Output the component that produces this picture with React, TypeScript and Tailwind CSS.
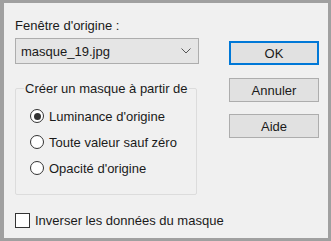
import React from "react";

const font = { fontFamily: '"Liberation Sans", Arial, sans-serif' };

function Radio({ label, checked }: { label: string; checked?: boolean }) {
  return (
    <div className="flex h-[26px] items-center">
      <span className="flex h-[14px] w-[14px] shrink-0 items-center justify-center rounded-full border border-[#333333] bg-white">
        {checked ? <span className="h-[7px] w-[7px] rounded-full bg-[#333333]" /> : null}
      </span>
      <span className="ml-[5px]">{label}</span>
    </div>
  );
}

function Button({ children, primary, className = "" }: { children: React.ReactNode; primary?: boolean; className?: string }) {
  return (
    <div
      className={`flex h-[24px] w-[90px] items-center justify-center bg-[#e1e1e1] ${
        primary ? "border-2 border-[#0078d7]" : "border border-[#adadad]"
      } ${className}`}
    >
      {children}
    </div>
  );
}

export default function App() {
  return (
    <div
      className="h-[241px] w-[331px] overflow-hidden whitespace-nowrap border-t-[3px] border-r-[3px] border-b-[3px] border-l-4 border-[#a0a0a0] bg-[#f0f0f0] text-[13px] leading-[17px] text-[#1a1a1a]"
      style={font}
    >
      <div className="flex pl-[11px] pt-[14px]">
        <div className="w-[184px] shrink-0">
          <div className="h-[17px]">Fenêtre d'origine :</div>
          <div className="mt-[4px] flex h-[26px] items-center justify-between border border-[#adadad] bg-[#e5e5e5] pl-[5px] pr-[7px]">
            <span>masque_19.jpg</span>
            <svg width="10" height="6" viewBox="0 0 10 6" fill="none">
              <path d="M0.5 0.5 L5 5 L9.5 0.5" stroke="#555" strokeWidth="1" />
            </svg>
          </div>
          <fieldset className="mt-[16px] h-[115px] w-[182px] min-w-0 rounded-[2px] border border-[#dcdcdc]">
            <legend className="ml-[8px] px-[1px]">Créer un masque à partir de</legend>
            <div className="mt-[6px] pl-[14px]">
              <Radio label="Luminance d'origine" checked />
              <Radio label="Toute valeur sauf zéro" />
              <Radio label="Opacité d'origine" />
            </div>
          </fieldset>
          <div className="mt-[17px] flex h-[17px] w-max items-center">
            <span className="h-[15px] w-[15px] shrink-0 border border-[#333333] bg-white" />
            <span className="ml-[5px]">Inverser les données du masque</span>
          </div>
        </div>
        <div className="ml-[30px] mt-[24px] flex flex-col">
          <Button primary>OK</Button>
          <Button className="mt-[13px]">Annuler</Button>
          <Button className="mt-[12px]">Aide</Button>
        </div>
      </div>
    </div>
  );
}
